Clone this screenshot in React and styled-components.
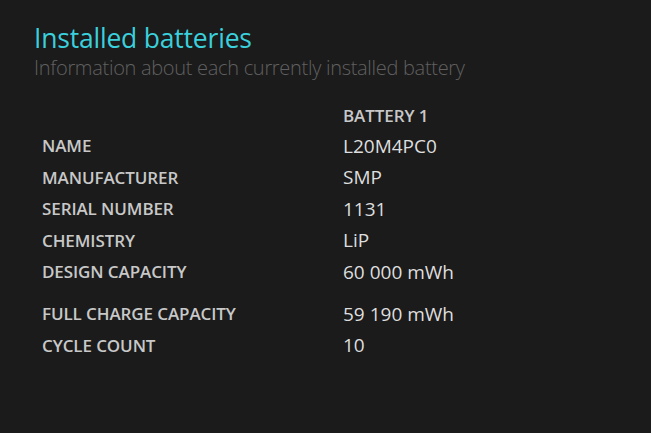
import styled, { createGlobalStyle } from 'styled-components';

const GlobalStyle = createGlobalStyle`
  html, body {
    margin: 0;
    padding: 0;
    background: #1b1b1b;
  }
  body {
    font-family: "Open Sans", "Noto Sans", sans-serif;
  }
`;

const rows = [
  { label: 'NAME', value: 'L20M4PC0' },
  { label: 'MANUFACTURER', value: 'SMP' },
  { label: 'SERIAL NUMBER', value: '1131' },
  { label: 'CHEMISTRY', value: 'LiP' },
  { label: 'DESIGN CAPACITY', value: '60 000 mWh', spaced: true },
  { label: 'FULL CHARGE CAPACITY', value: '59 190 mWh' },
  { label: 'CYCLE COUNT', value: '10' },
];

export default function App() {
  return (
    <>
      <GlobalStyle />
      <Page>
        <Title>Installed batteries</Title>
        <Subtitle>Information about each currently installed battery</Subtitle>
        <Table>
          <HeadRow>
            <Label />
            <Header>BATTERY 1</Header>
          </HeadRow>
          {rows.map((r) => (
            <Row key={r.label} spaced={r.spaced}>
              <Label>{r.label}</Label>
              <Value>{r.value}</Value>
            </Row>
          ))}
        </Table>
      </Page>
    </>
  );
}

const Page = styled.div`
  width: 651px;
  height: 433px;
  box-sizing: border-box;
  padding: 20px 0 0 34px;
  background: #1b1b1b;
`;

const Title = styled.h1`
  margin: 0;
  font-size: 26.5px;
  font-weight: 400;
  line-height: 36px;
  color: #3ad0dc;
  letter-spacing: -0.2px;
`;

const Subtitle = styled.p`
  margin: 0;
  font-size: 20px;
  font-weight: 300;
  line-height: 24px;
  color: #606060;
  letter-spacing: -0.3px;
`;

const Table = styled.div`
  display: flex;
  flex-direction: column;
  margin: 20.5px 0 0 8px;
`;

const HeadRow = styled.div`
  display: flex;
  align-items: center;
  height: 29.5px;
`;

const Row = styled.div`
  display: flex;
  align-items: center;
  height: 31.5px;
  margin-bottom: ${({ spaced }) => (spaced ? '10.5px' : '0')};
`;

const Label = styled.div`
  width: 301px;
  font-size: 17px;
  font-weight: 600;
  color: #c8c8c8;
  letter-spacing: -0.1px;
`;

const Header = styled.div`
  font-size: 17px;
  font-weight: 600;
  color: #c8c8c8;
  letter-spacing: -0.1px;
`;

const Value = styled.div`
  font-size: 19px;
  font-weight: 400;
  color: #dedede;
`;
